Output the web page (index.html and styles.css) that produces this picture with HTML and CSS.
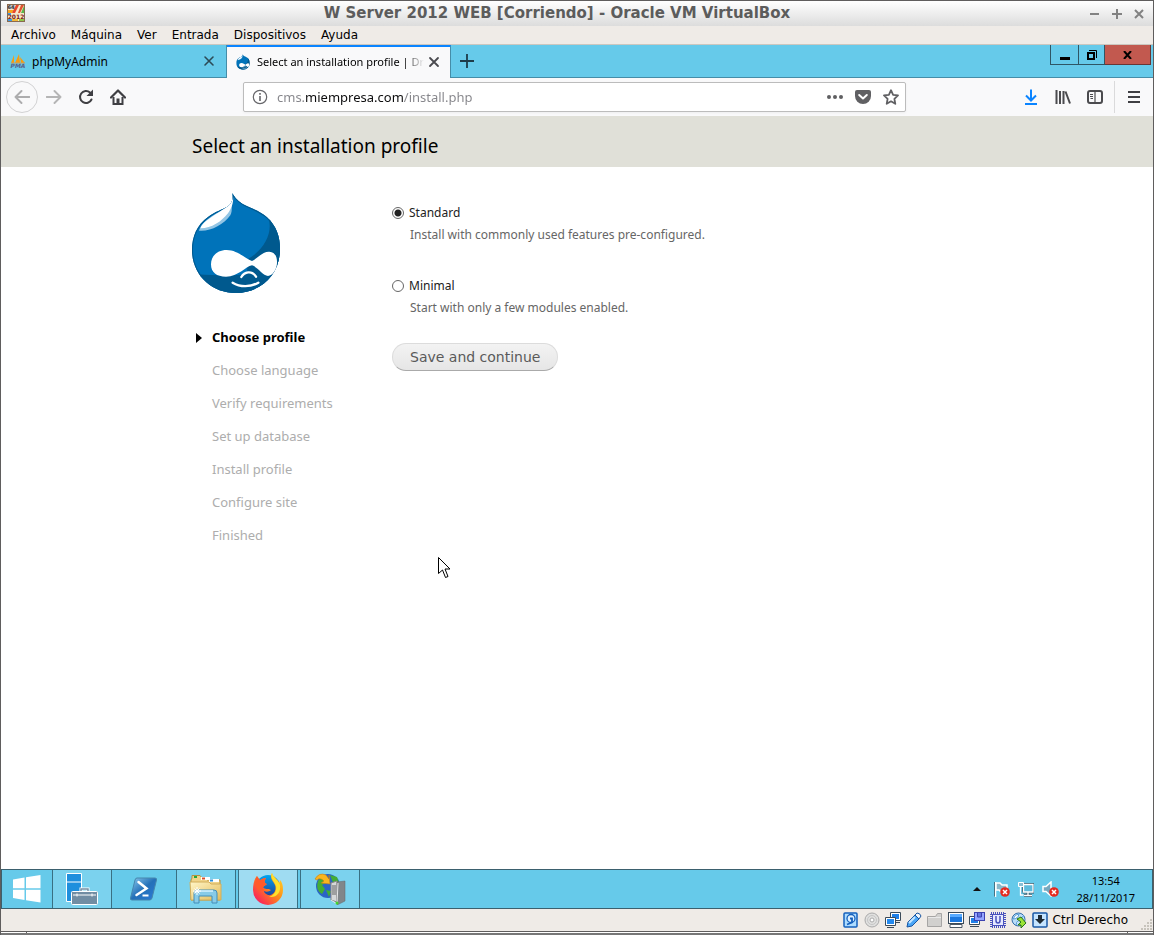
FILE: index.html
```
<!DOCTYPE html>
<html lang="es">
<head>
<meta charset="utf-8">
<title>W Server 2012 WEB [Corriendo] - Oracle VM VirtualBox</title>
<link rel="stylesheet" href="styles.css">
</head>
<body>
<div class="vm-window">
  <header class="titlebar">
    <svg class="vm-icon" width="18" height="18" viewBox="0 0 18 18"><rect width="18" height="18" fill="#8a6a50"/><rect x="1" y="1" width="16" height="16" fill="#f6e6c8"/><rect x="1" y="1" width="7" height="4" fill="#c9c9c9"/><path d="M1 6h6l-2 3H1z" fill="#f6a21c"/><path d="M9 1h3L8 9H5z" fill="#e8452c"/><path d="M17 2v7h-3z" fill="#57b847"/><path d="M14 1h3l-4 8h-2z" fill="#e0522f"/><path d="M1 9h3v2H1zM1 15h4v2H1z" fill="#3c9be8"/><path d="M5 15h6v2H5z" fill="#f3b93a"/><path d="M12 15h5v2h-5z" fill="#8fc74a"/><text x="9" y="15" class="vm-icon-year">2012</text><text x="4" y="5" class="vm-icon-bits">64</text></svg>
    <h1 class="titlebar-text">W Server 2012 WEB [Corriendo] - Oracle VM VirtualBox</h1>
    <div class="titlebar-controls">
      <button class="plain" aria-label="Minimizar"><svg width="12" height="12" viewBox="0 0 12 12"><path d="M1 6h9" stroke="#828282" stroke-width="2"/></svg></button>
      <button class="plain" aria-label="Maximizar"><svg width="12" height="12" viewBox="0 0 12 12"><path d="M1 6h10M6 1v10" stroke="#828282" stroke-width="2"/></svg></button>
      <button class="plain" aria-label="Cerrar"><svg width="12" height="12" viewBox="0 0 12 12"><path d="M2 2l8 8M10 2l-8 8" stroke="#828282" stroke-width="2"/></svg></button>
    </div>
  </header>
  <nav class="menubar">
    <button class="plain">Archivo</button><button class="plain">Máquina</button><button class="plain">Ver</button><button class="plain">Entrada</button><button class="plain">Dispositivos</button><button class="plain">Ayuda</button>
  </nav>

  <div class="tabstrip">
    <div class="tab">
      <svg width="16" height="16" viewBox="0 0 16 16"><path d="M4 2L1 10h3zM9 1L5 10h5zM10 4l5 6h-4z" fill="#f89c0e"/><path d="M1 10h14" stroke="#c0a070"/><text x="8" y="15" class="pma-text">PMA</text></svg>
      <span class="tab-title">phpMyAdmin</span>
      <button class="plain tab-close" aria-label="Cerrar pestaña"><svg width="12" height="12" viewBox="0 0 12 12"><path d="M2 2l8 8M10 2l-8 8" stroke="#2c4a56" stroke-width="1.6" stroke-linecap="round"/></svg></button>
    </div>
    <div class="tab tab-active">
      <svg width="16" height="16" viewBox="26 212 284 314"><use href="#drop"/></svg>
      <span class="tab-title tab-fade">Select an installation profile | Dr</span>
      <button class="plain tab-close" aria-label="Cerrar pestaña"><svg width="12" height="12" viewBox="0 0 12 12"><path d="M2 2l8 8M10 2l-8 8" stroke="#4a4a4f" stroke-width="1.8" stroke-linecap="round"/></svg></button>
    </div>
    <button class="plain new-tab" aria-label="Nueva pestaña"><svg width="14" height="14" viewBox="0 0 14 14"><path d="M0 7h14M7 0v14" stroke="#1d3c4a" stroke-width="1.8"/></svg></button>
    <div class="window-controls">
      <button class="plain wc" aria-label="Minimize"><svg width="10" height="12" viewBox="0 0 10 12"><path d="M0 9.500h10" stroke="#000" stroke-width="3"/></svg></button>
      <button class="plain wc wc-restore" aria-label="Restore"><svg width="10" height="10" viewBox="0 0 10 10"><path d="M1 3h6v6H1z" fill="none" stroke="#000" stroke-width="2"/><path d="M2 .5h7.500V8" fill="none" stroke="#000"/></svg></button>
      <button class="plain wc wc-close" aria-label="Close"><svg width="9" height="8" viewBox="0 0 9 8"><path d="M1 0l7 8M8 0L1 8" stroke="#000" stroke-width="2"/></svg></button>
    </div>
  </div>

  <div class="toolbar">
    <div class="nav-buttons">
      <button class="plain back" aria-label="Back"><svg width="16" height="16" viewBox="0 0 16 16"><path d="M15.500 8H1.500M7.500 2l-6 6 6 6" fill="none" stroke="#adadae" stroke-width="1.900" stroke-linecap="round" stroke-linejoin="round"/></svg></button>
      <button class="plain" aria-label="Forward"><svg width="16" height="16" viewBox="0 0 16 16"><path d="M.5 8h14M8.500 2l6 6-6 6" fill="none" stroke="#b5b5b5" stroke-width="1.900" stroke-linecap="round" stroke-linejoin="round"/></svg></button>
      <button class="plain" aria-label="Reload"><svg width="16" height="16" viewBox="0 0 16 16"><path d="M13.500 10.500A6 6 0 1 1 12 3.500" fill="none" stroke="#3f3f43" stroke-width="2" stroke-linecap="round"/><path d="M15 .5v6.500H8.500z" fill="#3f3f43"/></svg></button>
      <button class="plain" aria-label="Home"><svg width="16" height="16" viewBox="0 0 16 16"><path d="M1 8.500L8 1.500l7 7" fill="none" stroke="#3f3f43" stroke-width="2.200" stroke-linecap="round" stroke-linejoin="round"/><path d="M3.500 8v7h9V8" fill="none" stroke="#3f3f43" stroke-width="2"/><path d="M6.500 9.500h3V15h-3z" fill="#3f3f43"/></svg></button>
    </div>
    <div class="urlbar">
      <svg width="16" height="16" viewBox="0 0 16 16"><circle cx="8" cy="8" r="6.700" fill="none" stroke="#66666a" stroke-width="1.200"/><path d="M8 7v5M8 4v1.700" stroke="#66666a" stroke-width="1.600"/></svg>
      <input class="url-input" type="text" aria-label="Address" value="cms.miempresa.com/install.php">
      <button class="plain" aria-label="Page actions"><svg width="16" height="16" viewBox="0 0 16 16"><g fill="#5f5f61"><circle cx="2" cy="8" r="2"/><circle cx="8" cy="8" r="2"/><circle cx="14" cy="8" r="2"/></g></svg></button>
      <button class="plain" aria-label="Pocket"><svg width="16" height="16" viewBox="0 0 16 16"><path d="M2 1h12q2 0 2 2v4a8 8 0 0 1-16 0V3q0-2 2-2z" fill="#606063"/><path d="M4.200 6L8 9.500 11.800 6" fill="none" stroke="#fff" stroke-width="2" stroke-linecap="round" stroke-linejoin="round"/></svg></button>
      <button class="plain" aria-label="Bookmark"><svg width="16" height="16" viewBox="0 0 16 16"><path d="M8 1.200l2.100 4.600 4.900.6-3.600 3.400.9 5L8 12.300l-4.300 2.500.9-5L1 6.400l4.900-.6z" fill="none" stroke="#606063" stroke-width="1.800" stroke-linejoin="round"/></svg></button>
    </div>
    <div class="tool-buttons">
      <button class="plain" aria-label="Downloads"><svg width="16" height="16" viewBox="0 0 16 16"><path d="M8 .5v11M3 6.500l5 5 5-5M2 15h12" fill="none" stroke="#0a84ff" stroke-width="2"/></svg></button>
      <button class="plain" aria-label="Library"><svg width="16" height="16" viewBox="0 0 16 16"><path d="M1.500 1v14M5 2v13M8.500 2v13M10.500 2.500l4.500 12" fill="none" stroke="#4b4b4e" stroke-width="2"/></svg></button>
      <button class="plain" aria-label="Sidebar"><svg width="16" height="16" viewBox="0 0 16 16"><rect x="1" y="2" width="14" height="12" rx="2" fill="none" stroke="#4b4b4e" stroke-width="2"/><path d="M8 2v12M3 5.500h3M3 7.500h3M3.500 9.500H6" stroke="#4b4b4e" stroke-width="1.200"/></svg></button>
      <button class="plain menu-button" aria-label="Open menu"><svg width="16" height="16" viewBox="0 0 16 16"><path d="M2 3h12M2 8h12M2 13h12" stroke="#3f3f43" stroke-width="2"/></svg></button>
    </div>
  </div>

  <main class="page">
    <div class="branding"><h2 class="page-title">Select an installation profile</h2></div>
    <div class="page-body">
      <aside class="sidebar">
        <svg class="logo" width="88" height="100" viewBox="36 219 264 300" role="img" aria-label="Drupal">
          <defs><clipPath id="edge"><path d="M157 219C166 235 174 244 194 255C214 265 240 273 261 292C289 318 300 350 300 388C300 465 240 519 168 519C95 519 36 465 36 390C36 350 50 315 85 290C105 275 127 268 142 260C156 251 160 238 157 219Z"/></clipPath></defs>
          <g id="drop"><g clip-path="url(#edge)">
            <path d="M30 210h280v320H30z" fill="#0073ba"/>
            <path d="M266 298C278 335 255 388 205 416L200 463C160 468 110 466 50 463L40 530H310V300Z" fill="#00598e"/>
            <path d="M157 219C166 235 174 244 194 255C214 265 240 273 261 292C289 318 300 350 300 388C300 465 240 519 168 519C95 519 36 465 36 390C36 350 50 315 85 290C105 275 127 268 142 260C156 251 160 238 157 219Z" fill="none" stroke="#00598e" stroke-width="6"/>
            <path d="M160 232C155 260 125 270 95 289C72 305 62 318 57 332C92 335 130 315 151 286C160 270 151 256 160 232Z" fill="#93c5e4"/>
            <path d="M159 229C155 258 125 271 98 289C74 305 63 315 62 325C95 325 124 305 144 280C152 268 162 250 159 229Z" fill="#fff"/>
          </g>
          <path d="M93 433C93 408 112 390 140 390C172 390 195 415 216 423C232 415 248 394 268 395C286 396 292 412 291 430C290 448 278 468 264 468C248 466 232 440 216 436C196 440 175 470 138 470C110 470 93 458 93 433Z" fill="#fff"/>
          <path d="M184 471C193 456 215 450 228 470M158 488C180 502 212 502 235 488" fill="none" stroke="#fff" stroke-width="7" stroke-linecap="round"/></g>
        </svg>
        <ol class="tasks">
          <li class="task task-active">Choose profile</li>
          <li class="task">Choose language</li>
          <li class="task">Verify requirements</li>
          <li class="task">Set up database</li>
          <li class="task">Install profile</li>
          <li class="task">Configure site</li>
          <li class="task">Finished</li>
        </ol>
      </aside>
      <form class="profile-form">
        <div class="option">
          <div class="option-row"><input class="radio" type="radio" name="profile" id="standard" checked><label for="standard">Standard</label></div>
          <p class="description">Install with commonly used features pre-configured.</p>
        </div>
        <div class="option">
          <div class="option-row"><input class="radio" type="radio" name="profile" id="minimal"><label for="minimal">Minimal</label></div>
          <p class="description">Start with only a few modules enabled.</p>
        </div>
        <button class="submit" type="button">Save and continue</button>
      </form>
    </div>
    <svg class="pointer" width="13" height="22" viewBox="0 0 13 22"><path d="M.5.500v16l4-3.500 3 7.500 2.500-1-3-7.500h5z" fill="#fff" stroke="#000"/></svg>
  </main>

  <footer class="taskbar">
    <button class="plain task-button start" aria-label="Start"><svg width="28" height="28" viewBox="0 0 28 28"><path d="M0 4.500L11.500 2.500V13.300H0zM13 2.300L27.500 0V13.300H13zM0 14.700H11.500V25L0 23zM13 14.700H27.500V27.500L13 25.300z" fill="#fff"/></svg></button>
    <button class="plain task-button pinned" aria-label="Server Manager"><svg width="34" height="32" viewBox="0 0 34 32"><path d="M1.500.5h15v28h-15z" fill="#1f8fdd" stroke="#fff"/><path d="M1.500 9h15" stroke="#fff"/><path d="M16 18v-2h7v2" fill="none" stroke="#fff" stroke-width="3"/><path d="M16 18v-2h7v2" fill="none" stroke="#7590a5" stroke-width="1.500"/><rect x="6.500" y="18.500" width="26" height="13" rx="1" fill="#718da3" stroke="#fff"/><path d="M8 22h23M12 20.500v3M27 20.500v3" stroke="#fff"/></svg></button>
    <button class="plain task-button powershell" aria-label="PowerShell"><svg width="28" height="24" viewBox="0 0 28 24"><defs><linearGradient id="ps" x2="1" y2="1"><stop stop-color="#8fcdf0"/><stop offset=".5" stop-color="#2470b8"/><stop offset="1" stop-color="#2c7ad8"/></linearGradient></defs><path d="M7 1h18q2 0 1.500 2L22 21q-.5 2-2.500 2H2Q0 23 .5 21L5 3q.5-2 2-2z" fill="url(#ps)" stroke="#4586ad"/><path d="M8.500 5l8 6.500L6.500 18" fill="none" stroke="#fff" stroke-width="2.500" stroke-linecap="round"/><path d="M12.500 18.500h6" stroke="#fff" stroke-width="2"/></svg></button>
    <button class="plain task-button pinned explorer" aria-label="Explorer"><svg width="34" height="30" viewBox="0 0 34 30"><defs><linearGradient id="fo" x2="1" y2="1"><stop stop-color="#fff6c8"/><stop offset="1" stop-color="#e3bb5a"/></linearGradient></defs><path d="M3 4V1.500h8L13 4h4l1 2h13v20H2V6z" fill="#f0d489" stroke="#b6923f"/><path d="M5 2h3v2H5z" fill="#23a83b"/><path d="M12 3h9v3h-9z" fill="#fff"/><path d="M13 3.500h3v2h-3z" fill="#d8502a"/><path d="M20 5h10v3H20z" fill="#fff"/><path d="M21 5.500h3v2h-3z" fill="#2a8ed8"/><path d="M1 8h19l2 2h10v16H2z" fill="url(#fo)" stroke="#d2ae5a"/><path d="M5 29V19q0-3 3-3h17q3 0 3 3v10h-5v-7H10v7z" fill="#88cbe8" stroke="#438eb9"/><path d="M6 19q0-2 2-2h16" stroke="#d8f4ff" stroke-width="1.500" fill="none"/><path d="M8 13v8M4 17h8M5.500 14.500l5 5M10.500 14.500l-5 5" stroke="#fff"/></svg></button>
    <button class="plain task-button pinned firefox" aria-label="Firefox"><svg width="32" height="32" viewBox="0 0 32 32"><defs><linearGradient id="ff" x1="1" x2="0" y2="1"><stop stop-color="#ffe22c"/><stop offset=".45" stop-color="#ff8a18"/><stop offset=".8" stop-color="#fb3350"/><stop offset="1" stop-color="#e31587"/></linearGradient><linearGradient id="fb" x2="0" y2="1"><stop stop-color="#00a5f0"/><stop offset="1" stop-color="#24348f"/></linearGradient></defs><circle cx="16" cy="14" r="12" fill="url(#fb)"/><path d="M20 0C17 5 21 8 23 12C25 18 21 23 16 22C13 21 12 19 12 18C14 19 17 19 19 17C16 15 13 17 11 14L15 11C11 10 13 7 14 5C11 5 9 7 8 7C6 6 5 5 5 3C2 6 1 12 1 17A15 15 0 0 0 31 17C31 12 30 9 28 7C28 8 28 9 27 10C26 6 21 4 20 0Z" fill="url(#ff)"/><path d="M20 0C18 5 22 8 24 13C25 18 22 22 17 24C25 25 29 19 28 12C26 6 21 5 20 0Z" fill="#ffe12c"/><path d="M5 3C2 9 3 13 6 17L12 18L11 14L15 11C11 10 13 7 14 5C10 5 9 7 8 7Z" fill="#ff5a2b"/></svg></button>
    <button class="plain task-button pinned iis" aria-label="IIS Manager"><svg width="32" height="32" viewBox="0 0 32 32"><circle cx="14" cy="13" r="12" fill="#2b64c5"/><path d="M4 8q5-6 8-4l1 5-5 3 3 4-3 5Q1 17 4 8zM16 2l7 2 2 6-5 2zM12 17l5 1-2 6z" fill="#43ad35"/><path d="M1 6Q5-1 12 2l3 4V2l1 9-9-1 3-2q-4-4-7-1z" fill="#f9b51e" stroke="#c77e11" stroke-width=".6"/><path d="M17 10l6-2v21l-6-2z" fill="#d6d8da" stroke="#888"/><path d="M23 9l8-1v20l-8 4z" fill="#81868a" stroke="#62676b" stroke-width=".5"/><path d="M18 13h4M18 15h4M18 17h4M18 19h4M18 21h4" stroke="#666"/><path d="M17 27l6 4 1-21" fill="none" stroke="#e8e9ea"/><circle cx="23" cy="30" r="1.500" fill="#42d52b"/></svg></button>
    <div class="tray">
      <svg width="8" height="4" viewBox="0 0 8 4"><path d="M0 4l4-4 4 4z" fill="#111"/></svg>
      <svg width="17" height="16" viewBox="0 0 17 16"><path d="M2.500 1v15M3 2h4l2 2h5v7H8L6 9H3z" fill="#8bb9cb" stroke="#fff" stroke-width="1.500"/><path d="M1.500 1v14.500" stroke="#35596a" stroke-width=".8"/><circle cx="12" cy="11" r="4.800" fill="#e5291f"/><path d="M10 9l4 4M14 9l-4 4" stroke="#fff" stroke-width="1.500"/></svg>
      <svg width="16" height="16" viewBox="0 0 16 16"><path d="M5.500 3.500h9.500v7.500H5.500zM10 11v3M6 14.500h8" fill="#62adc9" stroke="#34586a" stroke-width="3"/><path d="M5.500 3.500h9.500v7.500H5.500zM10 11v3M6 14.500h8M2.500 6v8h3" fill="#5dbbdc" stroke="#fff" stroke-width="1.300"/><path d="M.5 1.500h5v4h-5z" fill="#89bfd4" stroke="#fff"/></svg>
      <svg width="17" height="16" viewBox="0 0 17 16"><path d="M1 5.500h3L9 1v14l-5-4.500H1z" fill="#75a8bf" stroke="#fff" stroke-width="1.500"/><circle cx="12" cy="11" r="4.800" fill="#e5291f"/><path d="M10 9l4 4M14 9l-4 4" stroke="#fff" stroke-width="1.500"/></svg>
      <div class="clock"><span>13:54</span><span>28/11/2017</span></div>
    </div>
  </footer>

  <div class="statusbar">
    <svg width="16" height="16" viewBox="0 0 16 16"><rect x="1" y="1" width="13" height="14" rx="1" fill="#aedcff" stroke="#1560bd" stroke-width="1.500"/><circle cx="8" cy="6.500" r="4" fill="#dff1ff" stroke="#1560bd" stroke-width="1.300"/><path d="M4 12.500l5-2V6.500H7" fill="none" stroke="#1560bd" stroke-width="1.800"/></svg>
    <svg width="16" height="16" viewBox="0 0 16 16"><circle cx="8" cy="8" r="7" fill="#e0e0df" stroke="#aaa"/><circle cx="8" cy="8" r="4.500" fill="none" stroke="#c5c5c5"/><circle cx="8" cy="8" r="2" fill="#fff" stroke="#aaa"/></svg>
    <svg width="16" height="16" viewBox="0 0 16 16"><path d="M5.500.500h10v8h-10z" fill="#fff" stroke="#3c4a58"/><path d="M7 2h7v5H7z" fill="#1e7fe8"/><path d="M9 10.500h6" stroke="#3c4a58"/><path d="M.5 5.500h10v8H.5z" fill="#fff" stroke="#3c4a58"/><path d="M2 7h7v5H2z" fill="#2389ef"/><path d="M2 15.500h7" stroke="#3c4a58"/></svg>
    <svg width="16" height="16" viewBox="0 0 16 16"><path d="M1 15l1-5 7-7 4 4-7 7z" fill="#4aa5f6" stroke="#1854a0"/><path d="M9 3l2-2q3 0 4 3l-2 3z" fill="#eef5fc" stroke="#1854a0"/><path d="M3 11l6-6" stroke="#c4e5ff" stroke-width="2"/></svg>
    <svg width="16" height="16" viewBox="0 0 16 16"><path d="M.5 14.500V4.500h8l2-3h4v13z" fill="#d1d0ce" stroke="#a6a5a4"/><path d="M1 5.500h13" stroke="#e9e9e9"/></svg>
    <svg width="16" height="16" viewBox="0 0 16 16"><rect x=".5" y=".5" width="15" height="11" fill="#fff" stroke="#3c4a58"/><path d="M2 2h12v8H2z" fill="#1b77de"/><path d="M2 2h12v3H2z" fill="#58aaff"/><path d="M2 12.500h12v3H2z" fill="#fff" stroke="#4c5966"/></svg>
    <svg width="16" height="16" viewBox="0 0 16 16"><path d="M.5 4.500h10v8H.5z" fill="#fff" stroke="#3c4a58"/><path d="M2 6h7v5H2z" fill="#2180e8"/><path d="M1 14.500h9" stroke="#3c4a58"/><rect x="5.500" y=".5" width="10" height="8" fill="#95a5ff" stroke="#3c42b0"/><path d="M8.500 1v4h4V1" fill="#6676e0" stroke="#3c42b0"/></svg>
    <svg width="16" height="16" viewBox="0 0 16 16"><rect x="1" y="1" width="14" height="14" fill="none" stroke="#4951bd" stroke-width="2" stroke-dasharray="1 1"/><rect x="2.500" y="2.500" width="11" height="11" fill="#e6e9ff" stroke="#4951bd"/><path d="M6 4v4.500q0 2.500 2 2.500t2-2.500V4" fill="none" stroke="#4951bd" stroke-width="1.500"/></svg>
    <svg width="16" height="16" viewBox="0 0 16 16"><circle cx="7.500" cy="7.500" r="6.500" fill="#b8dcf8" stroke="#336eaa"/><path d="M2 7q2-5 6-5-1 5-6 5zM5 13q0-4 4-5l4-5" fill="#fff" stroke="#559dd7"/><path d="M6 7l4-2 5 6-5 5v-3H7l3-3z" fill="#9be434" stroke="#28711a"/></svg>
    <svg width="16" height="16" viewBox="0 0 16 16"><rect x="1" y="1" width="14" height="14" rx="1" fill="#c5e4ff" stroke="#1957a5" stroke-width="1.500"/><path d="M6 3h4v4h3l-5 5-5-5h3z" fill="#1f2b35"/></svg>
    <span class="host-key">Ctrl Derecho</span>
    <svg class="grip" width="12" height="12" viewBox="0 0 12 12"><path d="M9 1h2M6 4h2M9 4h2M3 7h2M6 7h2M9 7h2M0 10h2M3 10h2M6 10h2M9 10h2" stroke="#bab6af" stroke-width="1.500"/></svg>
  </div>
  <div class="frame-bottom"><i class="frame-corner"></i><i class="frame-edge"></i><i class="frame-corner"></i></div>
</div>
</body>
</html>
```
FILE: styles.css
```
* { box-sizing: border-box; }
body { margin: 0; font-family: "DejaVu Sans", sans-serif; color: #000; }
svg { display: block; flex: none; }
h1, h2, p, ol { margin: 0; padding: 0; }

.plain { display: flex; align-items: center; justify-content: center; padding: 0; border: 0; background: none; font: inherit; color: inherit; }

.vm-window { display: flex; flex-direction: column; min-height: 100vh; border: 1px solid #5f5d5d; border-bottom: 0; background: #fff; }

.titlebar { display: flex; align-items: center; height: 25px; padding: 0 8px 0 6px; background: linear-gradient(#fff, #dcdcdc); }
.titlebar-text { flex: 1; padding-bottom: 2px; text-align: center; font-size: 15px; line-height: 22px; font-weight: bold; color: #5c5c5c; white-space: nowrap; }
.titlebar-controls { display: flex; gap: 10px; }
.vm-icon { margin-bottom: 2px; }
.vm-icon-year { font: bold 6px "DejaVu Sans", sans-serif; fill: #7c1d16; text-anchor: middle; }
.vm-icon-bits { font: bold 5px "DejaVu Sans", sans-serif; fill: #333; text-anchor: middle; }

.menubar { display: flex; align-items: center; gap: 15px; height: 19px; padding: 0 10px; border-bottom: 1px solid #cbc7c0; background: #efebe7; font-size: 12px; line-height: 16px; }

.tabstrip { display: flex; height: 33px; border-bottom: 1px solid #458da8; background: #66caea; font-family: "Noto Sans", sans-serif; font-size: 12px; }
.tab { display: flex; align-items: center; gap: 6px; width: 226px; padding: 0 11px 0 9px; border-right: 1px solid #458da8; }
.tab-active { width: 224px; height: 33px; padding: 0 10px 2px 8px; border-top: 2px solid #0a84ff; background: #f9f9fa; font-size: 11px; }
.tab-title { flex: 1; white-space: nowrap; }
.tab-active .tab-close { margin-left: -2px; }
.tab-fade { -webkit-mask-image: linear-gradient(90deg, #000 88%, transparent); mask-image: linear-gradient(90deg, #000 88%, transparent); }
.new-tab { width: 32px; }
.pma-text { font: italic bold 6px "DejaVu Sans", sans-serif; fill: #56608c; text-anchor: middle; }
.window-controls { display: flex; align-items: flex-start; margin-left: auto; padding-right: 2px; }
.wc { width: 29px; height: 20px; border: 1px solid #2f5665; border-top: 0; }
.wc-restore { width: 26px; border-left: 0; }
.wc-close { width: 46px; border-color: #6b3634; border-left: 0; background: #c2594f; }

.toolbar { display: flex; align-items: center; height: 38px; padding: 0 11px 0 5px; background: #f9f9fa; }
.nav-buttons { display: flex; align-items: center; gap: 16px; }
.back { width: 32px; height: 32px; margin-right: -8px; border: 1px solid #d2d2d3; border-radius: 50%; }
.urlbar { display: flex; align-items: center; gap: 12px; flex: 1; height: 30px; margin: 0 117px; padding: 0 6px 0 8px; border: 1px solid #bcbcbc; border-radius: 2px; background: #fff; box-shadow: 0 1px 3px #0000000d; }
.url-input { flex: 1; min-width: 0; height: 24px; margin-left: -3px; padding: 0; border: 0; outline: 0; font: 13px/24px "Noto Sans", sans-serif; color: transparent; background: linear-gradient(90deg, #85858a 28px, #0c0c0d 28px 127px, #85858a 127px); -webkit-background-clip: text; background-clip: text; }
.tool-buttons { display: flex; align-items: center; gap: 16px; }
.menu-button { height: 32px; margin-left: -5px; padding-left: 11px; border-left: 1px solid #dadadb; }

.page { position: relative; flex: 1; font-family: "Noto Sans", sans-serif; }
.branding { padding: 17px 20px 8px; background: #e0e0d8; }
.page-title { max-width: 770px; margin: 0 auto; font-size: 19px; line-height: 26px; font-weight: normal; }
.page-body { display: flex; max-width: 770px; margin: 0 auto; padding-top: 26px; }
.sidebar { width: 200px; }
.tasks { margin-top: 28px; list-style: none; font-size: 13px; line-height: 17px; color: #adadad; }
.task { padding: 8px 0 8px 20px; }
.task-active { display: flex; align-items: center; gap: 10px; padding-left: 4px; color: #000; font-weight: bold; }
.task-active::before { content: ""; border: 5px solid transparent; border-width: 5px 0 5px 6px; border-left-color: #000; }
.profile-form { flex: 1; padding-top: 11px; font-size: 12px; line-height: 18px; }
.option { margin-bottom: 29px; }
.option-row { display: flex; align-items: center; gap: 5px; color: #222; }
.radio { appearance: none; width: 12px; height: 12px; margin: 0; border: 1px solid #666; border-radius: 50%; background: #fff; }
.radio:checked { background: radial-gradient(circle, #222 3px, #fff 4px); }
.description { padding: 4px 0 4px 18px; color: #666; }
.option:last-of-type { margin-bottom: 22px; }
.submit { height: 28px; padding: 0 17px; border: 1px solid #dcdcdc; border-bottom-color: #aaa; border-radius: 14px; background: linear-gradient(#f3f3f3, #e6e6e6); font: 14px/24px "DejaVu Sans", sans-serif; color: #5a5a5a; }
.pointer { position: absolute; left: 437px; top: 441px; }

.taskbar { display: flex; height: 40px; border: 1px solid #3b606e; background: #66caea; font-family: "Noto Sans", sans-serif; }
.task-button { width: 60px; border: 0 solid #397083; border-width: 0 1px; }
.start { width: 51px; border-left: 0; }
.pinned { background: #7bd2ee; }
.start + .pinned { width: 59px; border-left: 0; }
.powershell { width: 64px; border: 0; }
.firefox { margin: 0 2px; background: #9fdcf2; }
.tray { display: flex; align-items: center; gap: 8px; margin-left: auto; padding-right: 17px; }
.tray > :first-child { margin-right: 4px; }
.clock { display: flex; flex-direction: column; align-items: center; margin-left: 9px; font-size: 11px; line-height: 17px; }

.statusbar { display: flex; align-items: center; justify-content: flex-end; gap: 5px; height: 22px; background: #efebe7; font-size: 12px; }
.host-key { line-height: 18px; }
.grip { margin-left: 8px; align-self: flex-end; }
.frame-bottom { display: flex; height: 4px; border-top: 1px solid #5f5d5d; border-bottom: 2px solid #777; background: #fff; }
.frame-edge { flex: 1; border: 0 solid #5f5d5d; border-width: 0 1px; }
.frame-corner { width: 25px; }
```
